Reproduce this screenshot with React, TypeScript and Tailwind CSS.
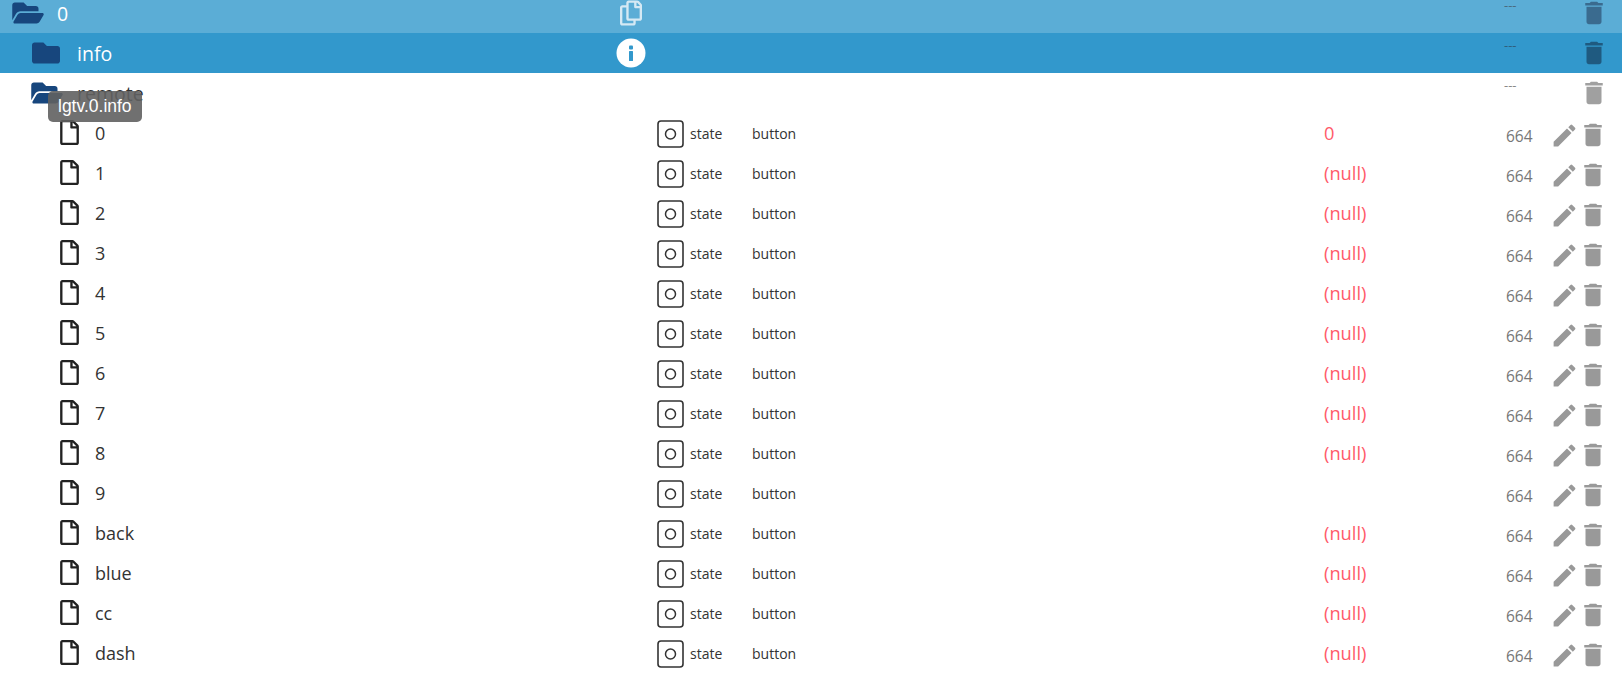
import React from "react";
import { FaFolder, FaFolderOpen, FaRegFile, FaRegCopy } from "react-icons/fa";
import { MdDelete, MdEdit } from "react-icons/md";

const names = ["0","1","2","3","4","5","6","7","8","9","back","blue","cc","dash"];
const vals: Record<string,string> = { "0": "0", "9": "" };
const font = "font-['Open_Sans','Noto_Sans',sans-serif]";

function StateIcon() {
  return (
    <svg width="28" height="28" viewBox="0 0 28 28" fill="none" className="mt-[1px] shrink-0">
      <rect x="1" y="1" width="25" height="26" rx="3" stroke="#333" strokeWidth="1.6" />
      <circle cx="13.5" cy="14" r="5" stroke="#333" strokeWidth="1.5" />
    </svg>
  );
}

function InfoIcon() {
  return (
    <svg width="30" height="30" viewBox="0 0 30 30" className="mt-[-1px]">
      <circle cx="15" cy="15" r="14.5" fill="#fff" />
      <rect x="13" y="7.5" width="4" height="4" rx="1" fill="#3298cc" />
      <rect x="13" y="13" width="4" height="10" rx="0.5" fill="#3298cc" />
    </svg>
  );
}

function Row({ name, val }: { name: string; val: string }) {
  return (
    <div className="flex h-10 items-center">
      <div className="flex w-[657px] items-center pl-[60px]">
        <FaRegFile className="mt-[-1px] h-[25px] w-[19px] shrink-0 text-[#222]" />
        <span className="ml-[16px] mt-[1px] text-[18px] text-[#333]">{name}</span>
      </div>
      <StateIcon />
      <span className="ml-[5px] mt-[1px] w-[62px] text-[14px] text-[#333]">state</span>
      <span className="mt-[1px] w-[572px] text-[14px] text-[#333]">button</span>
      <span className="w-[182px] text-[18.3px] text-[#ff5a6a]">{val}</span>
      <span className="mt-[8px] w-[44px] text-[15.5px] text-[#777]">664</span>
      <MdEdit className="mt-[4px] h-[29px] w-[29px] shrink-0 text-[#999]" />
      <MdDelete className="-ml-px mt-[3px] h-[30px] w-[30px] shrink-0 text-[#999]" />
    </div>
  );
}

function FolderRow({ label, open, indent, gap, bg, text, trash, dash, mid }: {
  label: string; open: boolean; indent: string; gap: string; bg: string; text: string; trash: string; dash: string; mid?: React.ReactNode;
}) {
  const Icon = open ? FaFolderOpen : FaFolder;
  return (
    <div className={`flex h-10 items-center ${bg}`}>
      <div className={`flex w-[616px] items-center ${indent}`}>
        <Icon className="h-[28px] w-[32px] shrink-0 text-[#17467d]" />
        <span className={`mt-[2px] text-[19.5px] ${gap} ${text}`}>{label}</span>
      </div>
      <div className="w-[888px]">{mid}</div>
      <span className={`mt-[-14px] w-[75px] text-[13px] ${dash}`}>---</span>
      <MdDelete className={`h-[30px] w-[30px] shrink-0 ${trash}`} />
    </div>
  );
}

export default function App() {
  return (
    <div className={`relative h-[676px] w-[1622px] overflow-hidden bg-white ${font}`}>
      <div className="mt-[-7px]">
        <FolderRow label="0" open indent="pl-[12px]" gap="ml-[13px]" bg="bg-[#5badd6]" text="text-white" trash="text-[#3a6b8f]" dash="text-[#4a6b80]"
          mid={<FaRegCopy className="ml-[4px] h-[26px] w-[22px] text-[#d5e9f4]" />} />
        <FolderRow label="info" open={false} indent="pl-[30px]" gap="ml-[15px]" bg="bg-[#3298cc]" text="text-white" trash="text-[#1f5a80]" dash="text-[#2f5f7d]"
          mid={<InfoIcon />} />
        <FolderRow label="remote" open indent="pl-[31px]" gap="ml-[14px]" bg="bg-white" text="text-[#333]" trash="text-[#a0a0a0]" dash="text-[#888]" />
        {names.map((n) => (
          <Row key={n} name={n} val={n in vals ? vals[n] : "(null)"} />
        ))}
      </div>
      <div className="absolute left-[48px] top-[91px] rounded-[5px] bg-[#616161]/90 px-[10px] py-[4px] font-['Liberation_Sans',sans-serif] text-[17.5px] leading-[23px] text-white">
        lgtv.0.info
      </div>
    </div>
  );
}
